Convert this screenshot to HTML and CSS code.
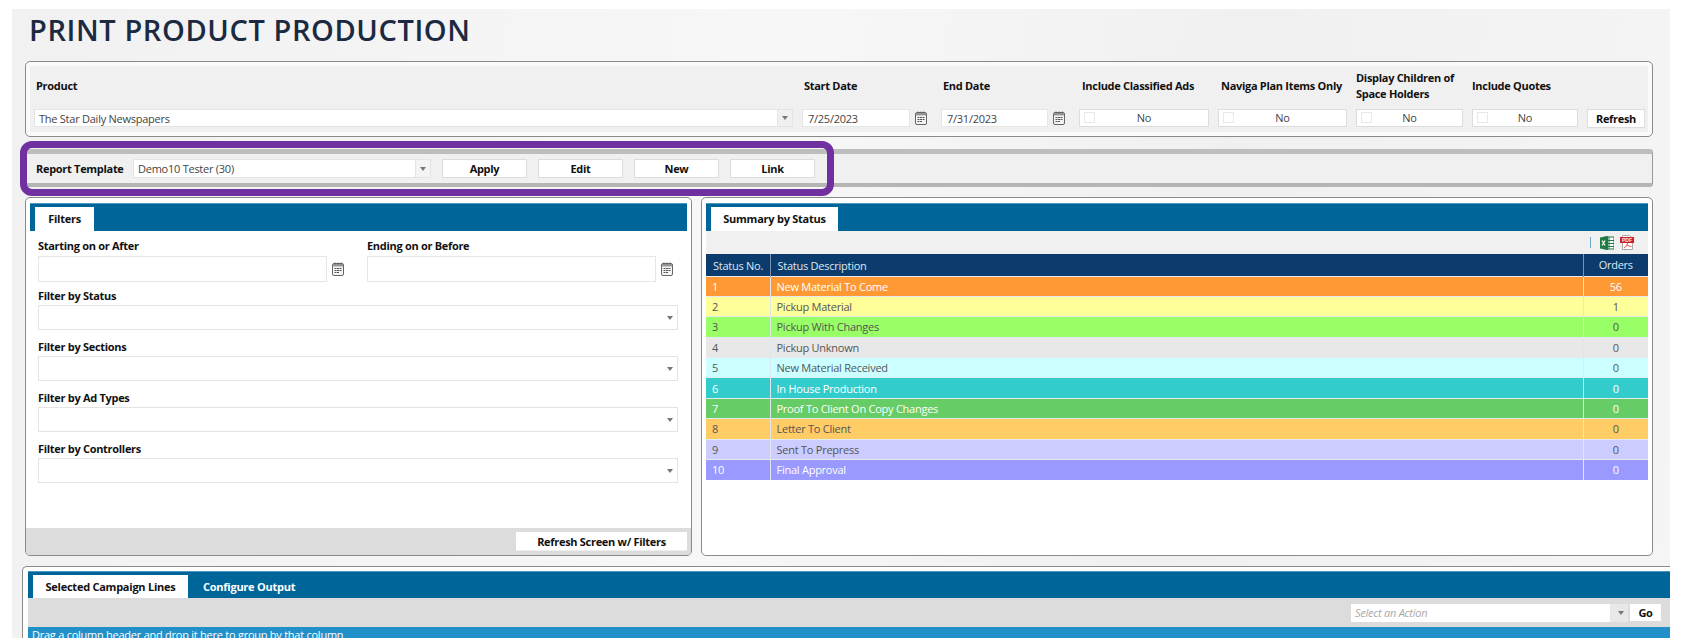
FILE: index.html
```html
<!DOCTYPE html>
<html lang="en">
<head>
  <meta charset="UTF-8" />
  <title>Print Product Production</title>
  <link rel="stylesheet" href="styles.css">
</head>
<body>
  <svg class="defs" width="0" height="0">
    <symbol id="cal" viewBox="0 0 12 14">
      <rect x="0.5" y="1.5" width="11" height="12" rx="1.5" fill="#f4f4f4" stroke="#666"/>
      <rect x="1" y="2" width="10" height="2.5" fill="#999"/>
      <path d="M3 0.5v2M6 0.5v2M9 0.5v2" stroke="#666"/>
      <path d="M2.500 6.500h2M5 6.500h2M7.500 6.500h2M2.500 8.500h2M5 8.500h2M7.500 8.500h2M2.500 10.500h2M5 10.500h2" stroke="#555"/>
    </symbol>
  </svg>
  <div class="page">
    <h1 class="title">PRINT PRODUCT PRODUCTION</h1>

    <!-- Product bar -->
    <section class="panel product-panel">
      <div class="product-grid">
        <label class="lbl lbl-inset">Product</label>
        <label class="lbl lbl-inset">Start Date</label>
        <label class="lbl lbl-inset">End Date</label>
        <label class="lbl lbl-inset-lg">Include Classified Ads</label>
        <label class="lbl lbl-inset-lg">Naviga Plan Items Only</label>
        <label class="lbl">Display Children of Space Holders</label>
        <label class="lbl">Include Quotes</label>
        <span></span>

        <div class="combo combo-sm"><span>The Star Daily Newspapers</span><i class="arrow-box"><b class="arrow"></b></i></div>
        <div class="date-field"><div class="input input-sm">7/25/2023</div><svg class="cal"><use href="#cal"/></svg></div>
        <div class="date-field"><div class="input input-sm">7/31/2023</div><svg class="cal"><use href="#cal"/></svg></div>
        <div class="toggle"><i class="box"></i><span>No</span></div>
        <div class="toggle"><i class="box"></i><span>No</span></div>
        <div class="toggle"><i class="box"></i><span>No</span></div>
        <div class="toggle"><i class="box"></i><span>No</span></div>
        <button class="btn">Refresh</button>
      </div>
    </section>

    <!-- Report template bar -->
    <section class="template-bar">
      <div class="template-row">
        <span class="lbl lbl-template">Report Template</span>
        <div class="combo combo-tpl"><span>Demo10 Tester (30)</span><i class="arrow-box"><b class="arrow"></b></i></div>
        <button class="btn btn-tpl">Apply</button>
        <button class="btn btn-tpl">Edit</button>
        <button class="btn btn-tpl">New</button>
        <button class="btn btn-tpl">Link</button>
      </div>
      <div class="highlight"></div>
    </section>

    <div class="columns">
      <!-- Filters -->
      <section class="panel filter-panel">
        <div class="tabbar"><span class="tab tab-filters">Filters</span></div>
        <div class="filter-body">
          <div class="date-pair">
            <div>
              <label class="lbl">Starting on or After</label>
              <div class="date-field date-lg"><div class="input"></div><svg class="cal"><use href="#cal"/></svg></div>
            </div>
            <div>
              <label class="lbl">Ending on or Before</label>
              <div class="date-field date-lg"><div class="input"></div><svg class="cal"><use href="#cal"/></svg></div>
            </div>
          </div>
          <label class="lbl">Filter by Status</label>
          <div class="combo combo-lg"><i class="arrow-plain"><b class="arrow"></b></i></div>
          <label class="lbl">Filter by Sections</label>
          <div class="combo combo-lg"><i class="arrow-plain"><b class="arrow"></b></i></div>
          <label class="lbl">Filter by Ad Types</label>
          <div class="combo combo-lg"><i class="arrow-plain"><b class="arrow"></b></i></div>
          <label class="lbl">Filter by Controllers</label>
          <div class="combo combo-lg"><i class="arrow-plain"><b class="arrow"></b></i></div>
        </div>
        <div class="filter-foot"><button class="btn btn-refresh">Refresh Screen w/ Filters</button></div>
      </section>

      <!-- Summary -->
      <section class="panel summary-panel">
        <div class="tabbar"><span class="tab tab-summary">Summary by Status</span></div>
        <div class="summary-tools">
          <i class="pipe"></i>
          <svg class="tool-icon" width="14" height="14" viewBox="0 0 14 14">
            <rect x="5" y="1" width="9" height="12" fill="#fff" stroke="#1f7a45"/>
            <path d="M9 1v12M5 4.500h9M5 7.500h9M5 10.500h9" stroke="#1f7a45"/>
            <path d="M0 1.500L8 0v14L0 12.500z" fill="#1f7a45"/>
            <path d="M2 4.500l3 5M5 4.500l-3 5" stroke="#fff" stroke-width="1.200"/>
          </svg>
          <svg class="tool-icon" width="14" height="15" viewBox="0 0 14 15">
            <path d="M2.500.5h7l3 3v11h-10z" fill="#fff" stroke="#aaa"/>
            <rect x="0" y="2" width="14" height="6" fill="#c8232c"/>
            <text class="pdf-mark" x="7" y="7">PDF</text>
            <path d="M4 13c2-1 3-3 3.500-5M7 10c1.500 1 3 1.500 4.500 1.500" stroke="#d9534f" fill="none"/>
          </svg>
        </div>
        <table class="status-table">
          <thead>
            <tr><th class="col-no">Status No.</th><th>Status Description</th><th class="col-orders">Orders</th></tr>
          </thead>
          <tbody>
            <tr class="st-orange light"><td>1</td><td>New Material To Come</td><td class="col-orders">56</td></tr>
            <tr class="st-yellow"><td>2</td><td>Pickup Material</td><td class="col-orders">1</td></tr>
            <tr class="st-lime"><td>3</td><td>Pickup With Changes</td><td class="col-orders">0</td></tr>
            <tr class="st-grey"><td>4</td><td>Pickup Unknown</td><td class="col-orders">0</td></tr>
            <tr class="st-ice"><td>5</td><td>New Material Received</td><td class="col-orders">0</td></tr>
            <tr class="st-teal light"><td>6</td><td>In House Production</td><td class="col-orders">0</td></tr>
            <tr class="st-green light"><td>7</td><td>Proof To Client On Copy Changes</td><td class="col-orders">0</td></tr>
            <tr class="st-amber"><td>8</td><td>Letter To Client</td><td class="col-orders">0</td></tr>
            <tr class="st-lilac"><td>9</td><td>Sent To Prepress</td><td class="col-orders">0</td></tr>
            <tr class="st-violet light"><td>10</td><td>Final Approval</td><td class="col-orders">0</td></tr>
          </tbody>
        </table>
      </section>
    </div>

    <!-- Campaign lines -->
    <section class="panel lines-panel">
      <div class="tabbar tabbar-lines">
        <span class="tab tab-lines">Selected Campaign Lines</span>
        <span class="tab-link">Configure Output</span>
      </div>
      <div class="lines-tools">
        <div class="combo combo-action"><span>Select an Action</span><i class="arrow-plain"><b class="arrow"></b></i></div>
        <button class="btn btn-go">Go</button>
      </div>
      <div class="group-hint">Drag a column header and drop it here to group by that column</div>
    </section>
  </div>
</body>
</html>
```

FILE: styles.css
```css
*, *::before, *::after {
  box-sizing: border-box;
}
html, body {
  margin: 0;
  padding: 0;
  height: 642px;
  overflow: hidden;
  background: #fff;
}
body {
  font-family: 'Open Sans', sans-serif;
  font-size: 11px;
  letter-spacing: -0.25px;
  color: #333;
}
.defs {
  position: absolute;
}

.page {
  margin: 9px 0 0 12px;
  width: 1658px;
  height: 629px;
  overflow: hidden;
  background: linear-gradient(100deg, #f1f1f1, #f7f7f7 45%, #f0f0f0 70%, #f5f5f5);
}
.title {
  margin: 0;
  padding: 1px 0 0 17px;
  height: 52px;
  font-size: 29px;
  line-height: 40px;
  font-weight: 600;
  letter-spacing: 0.6px;
  color: #1b2a41;
}

.panel {
  border: 1px solid #8a8a8a;
  border-radius: 5px;
  background: #fff;
}
.lbl {
  display: block;
  font-size: 11px;
  font-weight: 700;
  line-height: 16px;
  color: #111;
  letter-spacing: -0.3px;
}
.lbl-inset {
  padding-left: 2px;
}
.lbl-inset-lg {
  padding-left: 3px;
}

/* Product bar */
.product-panel {
  margin-left: 13px;
  width: 1628px;
  height: 76px;
  padding: 4px;
  background: #fafafa;
}
.product-grid {
  display: grid;
  grid-template-columns: 759px 130px 129px 130px 129px 107px 106px 58px;
  grid-template-rows: 40px 18px;
  row-gap: 3px;
  column-gap: 9px;
  align-items: center;
  height: 66px;
  padding-left: 4px;
  background: #f0f0f0;
}
.input {
  background: #fff;
  border: 1px solid #e6e6e6;
  flex: 1;
  height: 100%;
}
.input-sm {
  padding-left: 5px;
  line-height: 17px;
  color: #444;
}
.date-field {
  display: flex;
  align-items: center;
  height: 18px;
}
.cal {
  width: 12px;
  height: 14px;
  margin: 0 5px;
  flex: none;
}
.combo {
  display: flex;
  align-items: center;
  background: #fff;
  border: 1px solid #e4e4e4;
  color: #444;
}
.combo span {
  flex: 1;
  padding-left: 4px;
}
.combo-sm {
  height: 18px;
}
.arrow-box {
  display: flex;
  align-items: center;
  justify-content: center;
  width: 15px;
  height: 100%;
  background: #f0f0f0;
  border-left: 1px solid #e4e4e4;
}
.arrow-plain {
  display: flex;
  align-items: center;
  justify-content: center;
  width: 15px;
  height: 100%;
}
.arrow {
  display: block;
  border-left: 3px solid transparent;
  border-right: 3px solid transparent;
  border-top: 4px solid #777;
}
.toggle {
  position: relative;
  height: 18px;
  background: #fff;
  border: 1px solid #dcdcdc;
  text-align: center;
  line-height: 16px;
  color: #444;
}
.box {
  position: absolute;
  left: 4px;
  top: 2px;
  width: 11px;
  height: 11px;
  border: 1px solid #e8e8e8;
}
.btn {
  font-family: 'Open Sans', sans-serif;
  font-size: 11px;
  font-weight: 700;
  color: #111;
  background: #fff;
  border: 1px solid #dcdcdc;
  padding: 0;
  height: 19px;
  letter-spacing: -0.3px;
}

/* Template bar */
.template-bar {
  position: relative;
  margin: 12px 0 0 13px;
  width: 1628px;
  height: 38px;
  background: #f0f0f0;
  border: 1px solid #999;
  border-top: 5px solid #bdbdbd;
  border-bottom: 4px solid #b5b5b5;
  border-radius: 3px;
}
.template-row {
  display: flex;
  align-items: center;
  gap: 11px;
  height: 29px;
  padding-left: 10px;
}
.lbl-template {
  width: 86px;
  flex: none;
  white-space: nowrap;
}
.combo-tpl {
  width: 298px;
  height: 19px;
}
.combo-tpl .arrow-box {
  background: #f4f4f4;
}
.btn-tpl {
  width: 85px;
}
.highlight {
  position: absolute;
  left: -6px;
  top: -13px;
  width: 814px;
  height: 55px;
  border: 7px solid #7030a0;
  border-radius: 12px;
}

/* Middle columns */
.columns {
  display: grid;
  grid-template-columns: 667px 952px;
  column-gap: 9px;
  margin: 10px 0 0 13px;
  height: 359px;
}
.tabbar {
  display: flex;
  align-items: flex-end;
  height: 28px;
  margin: 5px 4px 0;
  padding-left: 5px;
  background: #006699;
  border-top: 1px solid #4a98bd;
}
.tab {
  display: block;
  height: 24px;
  background: #fff;
  font-size: 11px;
  font-weight: 700;
  line-height: 24px;
  color: #111;
  text-align: center;
  letter-spacing: -0.25px;
}
.tab-filters {
  width: 59px;
}
.tab-summary {
  width: 127px;
}

.filter-panel {
  display: flex;
  flex-direction: column;
}
.filter-body {
  flex: 1;
  padding: 7px 13px 0 12px;
}
.date-pair {
  display: grid;
  grid-template-columns: 329px 311px;
  margin-bottom: 6px;
}
.date-lg {
  height: 26px;
  margin-top: 2px;
}
.date-lg .input {
  flex: none;
  width: 289px;
}
.combo-lg {
  justify-content: flex-end;
  height: 25px;
  margin: 1px 0 9px;
}
.filter-foot {
  display: flex;
  justify-content: flex-end;
  align-items: center;
  height: 27px;
  padding-right: 4px;
  background: #dcdcdc;
  border-radius: 0 0 4px 4px;
}
.btn-refresh {
  width: 171px;
  border: none;
  border-bottom: 1px solid #eee;
}

/* Summary */
.summary-panel {
  overflow: hidden;
}
.summary-tools {
  display: flex;
  align-items: center;
  justify-content: flex-end;
  gap: 6px;
  height: 23px;
  margin: 0 4px;
  padding-right: 14px;
  background: #f0f0f0;
}
.pipe {
  display: block;
  width: 1px;
  height: 11px;
  margin-right: 3px;
  background: #6fa8c9;
}
.pdf-mark {
  font-family: 'Liberation Sans', sans-serif;
  font-size: 5px;
  font-weight: 700;
  letter-spacing: 0;
  fill: #ffe9e9;
  text-anchor: middle;
}
.status-table {
  width: 942px;
  margin: 0 4px;
  border-collapse: collapse;
  table-layout: fixed;
  font-size: 11px;
}
.status-table th {
  height: 22px;
  padding: 1px 0 0 7px;
  background: #0b3c6d;
  color: #dfe8f0;
  font-weight: 400;
  text-align: left;
  border-right: 1px solid #7a93ad;
}
.status-table th:last-child {
  border-right: none;
}
.status-table td {
  height: 20.4px;
  padding: 0 0 0 6px;
  border-right: 1px solid #dfe6ee;
  border-top: 1px solid #e3eaf0;
  color: #555;
}
.status-table td:last-child {
  border-right: none;
}
.status-table .col-no {
  width: 64px;
}
.status-table .col-orders {
  width: 65px;
  padding: 0;
  text-align: center;
}
.light td {
  color: #fff;
}
.st-orange { background: #ff9933; }
.st-yellow { background: #ffff99; }
.st-lime { background: #99ff66; }
.st-grey { background: #e8e8e8; }
.st-ice { background: #ccffff; }
.st-teal { background: #33cccc; }
.st-green { background: #66cc66; }
.st-amber { background: #ffcc66; }
.st-lilac { background: #ccccff; }
.st-violet { background: #9999ff; }

/* Campaign lines */
.lines-panel {
  margin: 10px 0 0 10px;
  height: 80px;
  border-right: none;
  border-bottom: none;
  border-radius: 5px 0 0 0;
  overflow: hidden;
}
.tabbar-lines {
  height: 27px;
  margin: 4px 0 0 5px;
  padding-left: 5px;
  align-items: flex-end;
}
.tab-lines {
  width: 155px;
  height: 23px;
  line-height: 23px;
}
.tab-link {
  margin-left: 15px;
  height: 23px;
  font-size: 11px;
  font-weight: 700;
  line-height: 23px;
  color: #fff;
}
.lines-tools {
  display: flex;
  justify-content: flex-end;
  align-items: center;
  height: 29px;
  margin-left: 5px;
  padding-right: 8px;
  background: #dcdcdc;
}
.combo-action {
  width: 277px;
  height: 18px;
  border: none;
  font-style: italic;
  color: #aaa;
  background: linear-gradient(to right, #fff 259px, #e8e8e8 259px);
}
.btn-go {
  width: 33px;
  height: 19px;
  margin-left: 1px;
}
.group-hint {
  height: 20px;
  margin-left: 5px;
  padding-left: 4px;
  background: #2290c8;
  color: #fff;
  font-size: 11px;
  line-height: 16px;
}
```
